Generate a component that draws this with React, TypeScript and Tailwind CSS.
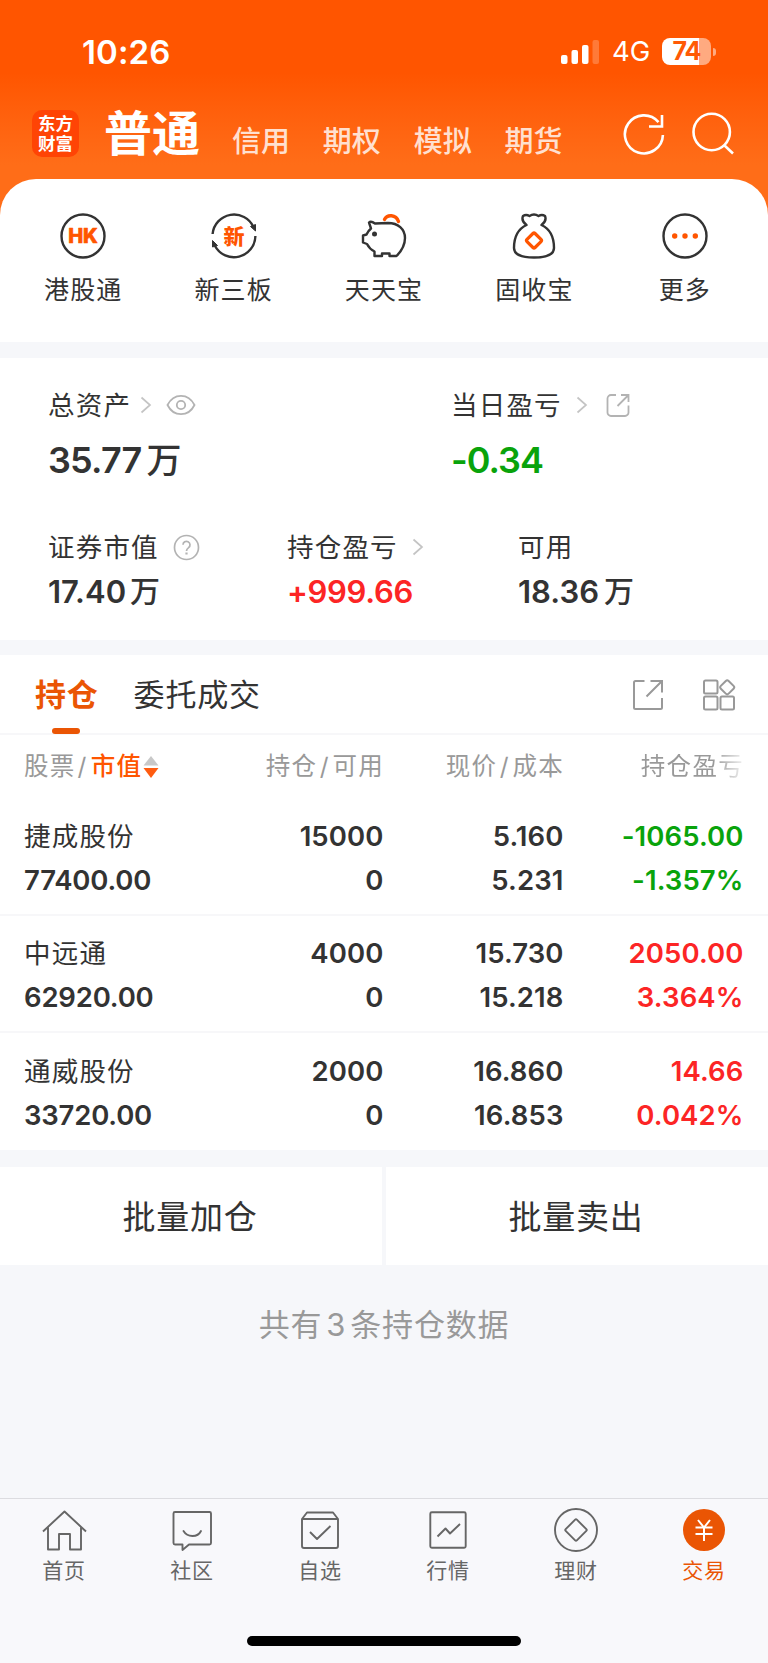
import type { ReactNode } from 'react'

const headerTabs = ['信用', '期权', '模拟', '期货']

const holdings = [
  { name: '捷成股份', value: '77400.00', qty: '15000', free: '0', price: '5.160', cost: '5.231', profit: '-1065.00', rate: '-1.357%', up: false },
  { name: '中远通', value: '62920.00', qty: '4000', free: '0', price: '15.730', cost: '15.218', profit: '2050.00', rate: '3.364%', up: true },
  { name: '通威股份', value: '33720.00', qty: '2000', free: '0', price: '16.860', cost: '16.853', profit: '14.66', rate: '0.042%', up: true },
]

function Chevron({ className = '' }: { className?: string }) {
  return (
    <svg className={className} width="12" height="18" viewBox="0 0 12 18" fill="none" stroke="#c4c4c4" strokeWidth="1.7">
      <path d="M1.5 1.5 10 9l-8.5 7.5" />
    </svg>
  )
}

function StatusBar() {
  return (
    <div className="flex h-[103px] items-center pl-[82px] pr-[52px] text-white">
      <span className="pt-px text-[33px] font-semibold leading-none tracking-[0.1px]">10:26</span>
      <svg className="ml-auto" width="40" height="26" viewBox="0 0 40 26" fill="#fff">
        <rect x="1" y="16" width="6.5" height="9" rx="2" />
        <rect x="11.5" y="11" width="6.5" height="14" rx="2" />
        <rect x="22" y="6" width="6.5" height="19" rx="2" />
        <rect x="32.5" y="1" width="6.5" height="24" rx="2" opacity="0.22" />
      </svg>
      <span className="ml-3 pt-px text-[27.5px] leading-none tracking-[-0.2px]">4G</span>
      <div className="ml-3 flex items-center">
        <div className="flex h-[27px] w-[49px] items-center justify-center rounded-lg bg-linear-to-r from-white from-75% to-[#ffaa80] to-75% text-[25px] font-bold leading-none tracking-[-1px] text-[#ff5a05]">
          74
        </div>
        <div className="ml-0.5 h-2 w-[3px] rounded-r-full bg-[#ffaa80]" />
      </div>
    </div>
  )
}

function Header() {
  return (
    <div className="flex h-[76px] items-start pl-8">
      <div className="mt-[7px] flex size-[47px] flex-col items-center justify-center gap-[2px] rounded-[10px] bg-[#ff4405] text-[17.5px] font-bold leading-none text-white">
        <span>东方</span>
        <span>财富</span>
      </div>
      <span className="ml-[25px] mt-[7px] text-[48px] font-bold leading-none text-white">普通</span>
      <nav className="ml-[32px] mt-[24px] flex gap-[32.8px] text-[29px] font-medium leading-none text-[#ffe0d0]">
        {headerTabs.map((t) => (
          <span key={t}>{t}</span>
        ))}
      </nav>
      <svg className="ml-[60px] mt-[8px]" width="44" height="46" viewBox="0 0 44 46" fill="none" stroke="#fff" strokeWidth="2.6">
        <path d="M40.9 24A19 19 0 1 1 36.5 11.2" />
        <path d="M40 4v11.500H27" />
      </svg>
      <svg className="ml-[25px] mt-[8px]" width="44" height="46" viewBox="0 0 44 46" fill="none" stroke="#fff" strokeWidth="2.6">
        <circle cx="20.700" cy="21" r="18.200" />
        <path d="m33 34 9 8.500" />
      </svg>
    </div>
  )
}

function QuickItem({ label, children }: { label: string; children: ReactNode }) {
  return (
    <div className="flex flex-1 flex-col items-center">
      <svg width="52" height="50" viewBox="-26 -25 52 50" fill="none" stroke="#333" strokeWidth="2.4" strokeLinejoin="round">
        {children}
      </svg>
      <span className="mt-[17px] text-[25px] leading-none tracking-[1.1px]">{label}</span>
    </div>
  )
}

function QuickActions() {
  return (
    <div className="flex h-[163px] rounded-t-[36px] bg-white px-2 pt-[32px]">
      <QuickItem label="港股通">
        <circle r="21.500" />
        <text x="0" y="7.300" textAnchor="middle" fontSize="20" fontWeight="800" fill="#ff5500" stroke="#ff5500" strokeWidth="0.6">HK</text>
      </QuickItem>
      <QuickItem label="新三板">
        <path d="M-21.400-2A21.500 21.500 0 0 1 19.500-9M21.400 0A21.500 21.500 0 0 1-19 10" />
        <path d="M16.500-9.500 21.500-11.500V-5ZM-16.500 9.500-21.500 11V4.500Z" fill="#333" strokeWidth="1" />
        <text x="0" y="7.500" textAnchor="middle" fontSize="21" fontWeight="900" fill="#ff5500" stroke="none">新</text>
      </QuickItem>
      <QuickItem label="天天宝">
        <path d="M-9-12.500Q-13-15.500-15-13.500L-13-7.500Q-16-5-17.500-1.500L-21-.5V6.500L-17 8Q-14.500 13-9.500 15.500V20H-2V17.500H5.500V20H12.500Q21 11.500 21 2C21-7 14-13 4-13Z" />
        <circle cx="-9.500" cy="-2" r="2.500" fill="#333" stroke="none" />
        <path d="M.5-16.500C3-21.800 12-21.800 14.500-14.500" stroke="#ff5500" strokeWidth="3.400" strokeLinecap="round" />
      </QuickItem>
      <QuickItem label="固收宝">
        <path d="M-7.500-11Q-13-15-11-20Q-8-22-4.500-20Q0-23 4.500-20Q8-22 11-20Q13-15 7.500-11C16-7 20 1 20 12Q20 21.500 0 21.500Q-20 21.500-20 12C-20 1-16-7-7.500-11Z" />
        <rect x="-5.700" y="-5.700" width="11.400" height="11.400" rx="1.500" transform="translate(0 4.500) rotate(45)" stroke="#ff5500" strokeWidth="3.200" />
      </QuickItem>
      <QuickItem label="更多">
        <circle r="21.500" />
        <g fill="#ff5500" stroke="none">
          <circle cx="-10.300" r="2.700" />
          <circle r="2.700" />
          <circle cx="10.300" r="2.700" />
        </g>
      </QuickItem>
    </div>
  )
}

function Assets() {
  const label = 'flex h-7 items-center text-[26.5px] leading-none tracking-[1.2px]'
  return (
    <section className="h-[282px] bg-white pl-12 pt-[33px]">
      <div className="flex">
        <div className="w-[403px]">
          <div className={label}>
            总资产
            <Chevron className="ml-[9px]" />
            <svg className="ml-[14px]" width="30" height="22" viewBox="0 0 30 22" fill="none" stroke="#b3b3b3" strokeWidth="1.8">
              <path d="M1.500 11C4.500 5 9.500 1.800 15 1.800S25.500 5 28.500 11C25.500 17 20.500 20.200 15 20.200S4.500 17 1.500 11Z" />
              <circle cx="15" cy="11" r="4.200" />
            </svg>
          </div>
          <div className="mt-[23px] flex h-9 items-center text-[36px] font-semibold leading-none tracking-[-0.8px]">
            35.77<span className="ml-[5px] text-[35px] font-medium">万</span>
          </div>
        </div>
        <div>
          <div className={label}>
            当日盈亏
            <Chevron className="ml-[14px]" />
            <svg className="ml-[17px]" width="26" height="26" viewBox="0 0 26 26" fill="none" stroke="#b3b3b3" strokeWidth="1.800">
              <path d="M11 3H6a3.500 3.500 0 0 0-3.500 3.500v14A3.500 3.500 0 0 0 6 24h14a3.500 3.500 0 0 0 3.500-3.500v-7M16 3h7.500v7M23.500 3 12.500 14" />
            </svg>
          </div>
          <div className="mt-[23px] flex h-9 items-center text-[36px] font-semibold leading-none tracking-[-1px] text-[#09a30b]">-0.34</div>
        </div>
      </div>
      <div className="mt-[55px] flex">
        <div className="w-[239px]">
          <div className={label}>
            证券市值
            <svg className="ml-[14px]" width="27" height="27" viewBox="0 0 27 27" fill="none" stroke="#b3b3b3" strokeWidth="1.700">
              <circle cx="13.500" cy="13.500" r="12" />
              <path d="M10 10.800a3.500 3.500 0 1 1 5.600 2.800c-1.300 1-2.100 1.700-2.100 3.400" />
              <path d="M13.500 18.500v2" strokeWidth="2.200" />
            </svg>
          </div>
          <div className="mt-[14px] flex h-8 items-center text-[31px] font-semibold leading-none">
            17.40<span className="ml-[4px] text-[30px] font-medium">万</span>
          </div>
        </div>
        <div className="w-[231px]">
          <div className={label}>
            持仓盈亏
            <Chevron className="ml-[14px]" />
          </div>
          <div className="mt-[14px] flex h-8 items-center text-[31px] font-semibold leading-none tracking-[-0.300px] text-[#fc2525]">+999.66</div>
        </div>
        <div>
          <div className={label}>可用</div>
          <div className="mt-[14px] flex h-8 items-center text-[31px] font-semibold leading-none">
            18.36<span className="ml-[5px] text-[30px] font-medium">万</span>
          </div>
        </div>
      </div>
    </section>
  )
}

function Holdings() {
  return (
    <section className="h-[495px] shrink-0 bg-white">
      <div className="flex h-[80px] items-start border-b-2 border-[#f7f7f9] pl-[35px] pr-8 text-[31px] leading-none tracking-[0.8px]">
        <div className="flex h-[79px] flex-col items-center pt-[24px] font-bold text-[#ea5504]">
          持仓
          <span className="mt-auto mr-px h-[6px] w-[28px] rounded-[3px] bg-[#ea5504]" />
        </div>
        <span className="ml-[35px] mt-[24px]">委托成交</span>
        <svg className="ml-auto mt-[24px]" width="32" height="32" viewBox="0 0 32 32" fill="none" stroke="#999" strokeWidth="2">
          <path d="M12.500 2H3.500Q2 2 2 3.500V28.500Q2 30 3.500 30H28.500Q30 30 30 28.500V19M18.500 2H30V13.500M30 2 14.500 17.500" />
        </svg>
        <svg className="ml-[38px] mt-[23px]" width="34" height="34" viewBox="0 0 34 34" fill="none" stroke="#999" strokeWidth="2">
          <rect x="2" y="2.500" width="13.500" height="13" rx="1.500" />
          <rect x="2" y="18.500" width="13.500" height="13" rx="1.500" />
          <rect x="18.500" y="18.500" width="13.500" height="13" rx="1.500" />
          <rect x="19.700" y="3.800" width="11" height="11" rx="2" transform="rotate(45 25.200 9.300)" />
        </svg>
      </div>
      <div className="grid h-[63px] grid-cols-[200px_160px_180px_180px] items-center pl-6 text-right text-[24.500px] leading-none tracking-[1.300px] text-[#999]">
        <div className="flex items-center text-left">
          股票<span className="ml-[2px] mr-[3px]">/</span>
          <span className="font-medium text-[#ff5500]">市值</span>
          <svg className="ml-px" width="16" height="22" viewBox="0 0 16 22">
            <path d="M8 0l7.500 9.500H.5z" fill="#c8c8c8" />
            <path d="M8 22l7.500-10H.5z" fill="#ff5c10" />
          </svg>
        </div>
        <div>持仓<span className="mx-[2.500px]">/</span>可用</div>
        <div>现价<span className="mx-[2.500px]">/</span>成本</div>
        <div className="bg-linear-to-r from-[#999] from-83% to-[#99999920] bg-clip-text text-transparent">持仓盈亏</div>
      </div>
      {holdings.map((h, i) => (
        <div
          key={h.name}
          className={`grid h-[117.700px] grid-cols-[200px_159.500px_180px_180px] content-start gap-y-[16.200px] pl-6 pt-[23.500px] text-right text-[27.500px] font-semibold leading-[28px] tracking-[0.100px] ${
            i < holdings.length - 1 ? 'border-b-2 border-[#f7f7f9]' : ''
          }`}
        >
          <span className="text-left text-[26.500px] font-normal tracking-[1.200px]">{h.name}</span>
          <span>{h.qty}</span>
          <span>{h.price}</span>
          <span className={h.up ? 'text-[#fc2525]' : 'text-[#09a30b]'}>{h.profit}</span>
          <span className="text-left tracking-[-0.200px]">{h.value}</span>
          <span>{h.free}</span>
          <span>{h.cost}</span>
          <span className={h.up ? 'text-[#fc2525]' : 'text-[#09a30b]'}>{h.rate}</span>
        </div>
      ))}
    </section>
  )
}

function NavItem({ label, active, children }: { label: string; active?: boolean; children: ReactNode }) {
  return (
    <div className={`flex flex-1 flex-col items-center ${active ? 'text-[#ea5504]' : 'text-[#666]'}`}>
      <svg width="46" height="46" viewBox="-23 -23 46 46" fill="none" stroke="currentColor" strokeWidth="1.900" strokeLinejoin="round">
        {children}
      </svg>
      <span className="mt-[7px] text-[21px] leading-none tracking-[0.800px]">{label}</span>
    </div>
  )
}

function BottomNav() {
  return (
    <nav className="mt-auto h-[165px] border-t border-[#dcdce0] bg-[#f8f8fb]">
      <div className="flex pt-[8px]">
        <NavItem label="首页">
          <path d="M-21 1.500 .5-18.500 22 1.500M-16-2.500V19.500H-5V4H6V19.500H17V-2.500" />
        </NavItem>
        <NavItem label="社区">
          <path d="M-17-18H17.500Q19-18 19-16.500V13Q19 14.500 17.500 14.500H-3L-9.500 20V14.500H-17Q-18.500 14.500-18.500 13V-16.500Q-18.500-18-17-18Z" />
          <path d="M-8.500 1Q-5.500 6 .5 6T9 1" strokeLinecap="round" />
        </NavItem>
        <NavItem label="自选">
          <path d="M-18-11-13-17.500H13L18-11V16Q18 18 16 18H-16Q-18 18-18 16ZM-18-11H18M-10 2-3 9 10.500-4" />
        </NavItem>
        <NavItem label="行情">
          <rect x="-17.700" y="-17.700" width="35.400" height="35.400" rx="1.500" />
          <path d="M-10.500 6.500-2.500-1.500 2 3.500 12-6" />
        </NavItem>
        <NavItem label="理财">
          <circle r="21" />
          <rect x="-7.900" y="-7.900" width="15.800" height="15.800" rx="1.200" transform="rotate(45)" />
        </NavItem>
        <NavItem label="交易" active>
          <circle r="21" fill="currentColor" stroke="none" />
          <path d="M-6-10 0-2.500 6-10M0-2.500V11M-8.500-2.500H8.500M-8.500 4H8.500" stroke="#fff" strokeWidth="2" />
        </NavItem>
      </div>
      <div className="mx-auto mt-[55px] h-[10px] w-[274px] rounded-full bg-black" />
    </nav>
  )
}

export default function App() {
  return (
    <div className="flex h-[1663px] w-[768px] flex-col overflow-hidden bg-[#f6f7fa] font-['Inter','Noto_Sans_CJK_SC',sans-serif] text-[#333]">
      <header className="bg-linear-to-b from-[#ff5500] from-[73px] to-[#ff6d18] to-[165px]">
        <StatusBar />
        <Header />
        <QuickActions />
      </header>
      <div className="h-4 shrink-0" />
      <Assets />
      <div className="h-[15px] shrink-0" />
      <Holdings />
      <div className="mt-[16.500px] grid h-[98.500px] shrink-0 grid-cols-2 gap-1 text-[33px] leading-none tracking-[0.800px]">
        <button type="button" className="bg-white pr-[2px] pt-[3px]">批量加仓</button>
        <button type="button" className="bg-white pr-[2px] pt-[3px]">批量卖出</button>
      </div>
      <p className="mt-[44px] text-center text-[31px] leading-none tracking-[0.800px] text-[#999]">
        共有<span className="mx-[4px]">3</span>条持仓数据
      </p>
      <BottomNav />
    </div>
  )
}
